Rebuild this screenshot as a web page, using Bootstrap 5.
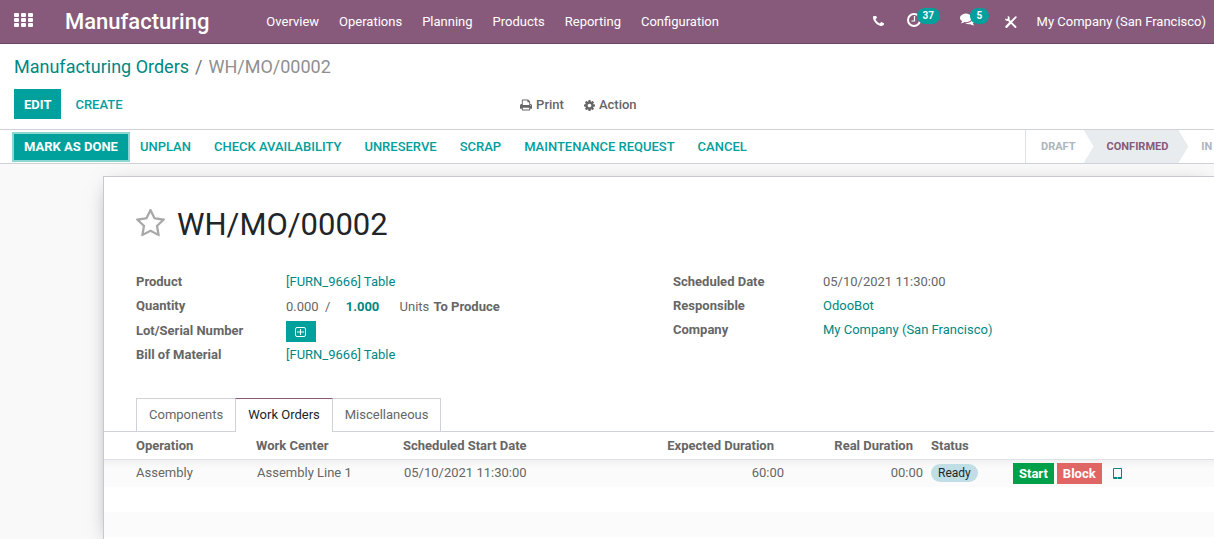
<!DOCTYPE html>
<html lang="en">
<head>
<meta charset="utf-8">
<meta name="viewport" content="width=device-width, initial-scale=1">
<title>WH/MO/00002 - Manufacturing</title>
<link rel="stylesheet" href="https://cdn.jsdelivr.net/npm/bootstrap@5.3.0/dist/css/bootstrap.min.css">
<style>
  :root { --teal: #00a09d; --plum: #875a7b; --link: #008784; --line: #cfd2da; }
  body { font: 13px/20px Roboto, sans-serif; color: #666; background: #f9f9f9; overflow-x: hidden; }
  a { color: var(--link); text-decoration: none; }
  svg { fill: currentColor; display: block; flex: none; }
  .btn { --bs-btn-font-size: 13px; --bs-btn-line-height: 20px; --bs-btn-border-radius: 0; --bs-btn-border-width: 0; --bs-btn-font-weight: 500; white-space: nowrap; }

  /* top navigation */
  .topbar { background: var(--plum); border-bottom: 1px solid #68465f; height: 44px; padding: 0 8px 0 14px; }
  .topbar a, .topbar button { color: #fff; white-space: nowrap; }
  .topbar .brand { font-size: 22px; line-height: 40px; font-weight: 500; margin: 0 57px 0 32px; }
  .apps-btn { margin-bottom: 3px; }
  .menu-links { gap: 20px; }
  .count-pill { position: absolute; left: 10px; top: -5px; background: var(--teal); border-radius: 8px; padding: 0 6px; font-size: 10px; line-height: 16px; font-weight: 700; }
  .tray-chat .count-pill { padding: 0 7px; }
  .tray-phone { margin-right: 23px; }
  .tray-clock { margin-right: 39px; margin-bottom: 4px; }
  .tray-chat { margin-right: 30px; margin-bottom: 4px; }
  .tray-tools { margin-right: 20px; }

  /* breadcrumb, buttons and status bar */
  .trail { font-size: 18px; line-height: 24px; padding: 11px 14px 10px; color: #8f8f8f; }
  .trail .slash { margin: 0 6px; color: #6c757d; }
  .tool-row { padding: 0 14px 10px; }
  .btn-main { --bs-btn-bg: var(--teal); --bs-btn-color: #fff; --bs-btn-hover-bg: #008784; --bs-btn-hover-color: #fff; --bs-btn-font-weight: 700; padding: 5px 10px; }
  .btn-flat { --bs-btn-color: var(--teal); --bs-btn-hover-color: #006d6b; padding: 5px 11px; }
  .btn-tool { --bs-btn-color: #666; padding: 5px 10px; }
  .tool-row .btn { padding-top: 6px; padding-bottom: 4px; }
  .tool-row .btn-tool { padding-left: 8px; padding-right: 12px; }
  .actions-left { flex: 0 0 42%; gap: 3px; }
  .statusbar { border-top: 1px solid var(--line); border-bottom: 1px solid var(--line); height: 35px; padding-left: 14px; }
  .status-actions { gap: 1px; }
  .statusbar .btn { padding-top: 3px; padding-bottom: 3px; }
  .statusbar .btn-main { outline: 2px solid #8cd6d4; }
  .steps { flex: 0 0 189px; overflow: hidden; border-left: 1px solid #dee2e6; font-size: 11px; line-height: 33px; font-weight: 700; color: #adb5bd; white-space: nowrap; }
  .step-first { padding: 0 8px 0 15px; }
  .step-current { background: #e9ecef; color: var(--plum); padding: 0 20px 0 23px; clip-path: polygon(0 0, calc(100% - 10px) 0, 100% 50%, calc(100% - 10px) 100%, 0 100%, 10px 50%); }
  .step-next { padding-left: 13px; }

  /* form sheet */
  .sheet { margin: 12px 0 0 103px; background: #fff; border: solid #c8c8d3; border-width: 1px 0 0 1px; box-shadow: 0 5px 20px -8px rgba(0,0,0,.5); }
  .sheet-body { padding: 24px 4px 0 32px; }
  .title-row { gap: 12px; }
  .sheet h1 { font-size: 31px; line-height: 46px; font-weight: 400; color: #212529; margin: 0; padding-top: 1px; }
  .star { color: #a8a8a8; border: 0; background: none; padding: 0 0 4px; }
  .fields { padding-top: 24px; min-height: 150px; }
  .field-row { display: grid; grid-template-columns: 150px 1fr; min-height: 24px; padding-bottom: 4px; }
  .field-row dt { font-weight: 700; }
  .field-row dd { margin: 0; }
  .field-row .qty { padding-top: 1px; }
  .qty b { color: var(--link); margin: 0 17px 0 12px; }
  .qty strong { margin-left: 1px; }
  .field-row.lot-row { padding-bottom: 3px; }
  .lot-btn { padding: 6px 10px 5px 9px; }

  /* notebook tabs and work order list */
  .tabs { padding-left: 32px; border-bottom: 1px solid var(--line); }
  .tabs .nav-link { color: #666; border: 1px solid var(--line); border-bottom: 0; border-radius: 0; padding: 6px 12px; margin-left: -1px; }
  .tabs .nav-item:first-child .nav-link { margin-left: 0; }
  .tabs .nav-link.active { color: #212529; background: #fff; border-top-color: var(--plum); margin-bottom: -1px; padding-bottom: 7px; position: relative; }
  .orders { table-layout: fixed; width: 100%; }
  .orders th { font-weight: 700; padding: 4px 4px 3px; }
  .orders td { padding: 0 5px; height: 25px; }
  .orders thead { border-bottom: 1px solid #dee2e6; }
  .orders th:first-child, .orders td:first-child { padding-left: 32px; }
  .orders th.num { padding-right: 14px; }
  .orders td.num { padding-right: 4px; }
  .orders tbody tr:nth-child(odd) { background: #fbfbfb; }
  .orders tbody tr:first-child { background: linear-gradient(#f1f1f1, #fbfbfb 8px); }
  .orders tbody tr:first-child td { height: 27px; }
  .state-pill { background: #c1dee6; color: #212529; border-radius: 9px; font-size: 12px; line-height: 18px; padding: 0 7px; display: inline-block; }
  .orders .btn { padding: 0 6px; line-height: 21px; font-weight: 700; color: #fff; }
  .btn-go { --bs-btn-bg: #00a04a; --bs-btn-hover-bg: #00873e; }
  .btn-stop { --bs-btn-bg: #e06666; --bs-btn-hover-bg: #cc5252; margin-left: 3px; }
  .tablet { margin-left: 11px; }
</style>
</head>
<body class="d-flex flex-column min-vh-100">
<nav class="topbar d-flex align-items-center">
  <button class="btn p-0 apps-btn" aria-label="Apps"><svg width="19" height="15" viewBox="0 0 19 15"><path d="M1 0h3q1 0 1 1v2q0 1-1 1H1q-1 0-1-1V1q0-1 1-1zm7 0h3q1 0 1 1v2q0 1-1 1H8q-1 0-1-1V1q0-1 1-1zm7 0h3q1 0 1 1v2q0 1-1 1h-3q-1 0-1-1V1q0-1 1-1zM1 5h3q1 0 1 1v2q0 1-1 1H1q-1 0-1-1V6q0-1 1-1zm7 0h3q1 0 1 1v2q0 1-1 1H8q-1 0-1-1V6q0-1 1-1zm7 0h3q1 0 1 1v2q0 1-1 1h-3q-1 0-1-1V6q0-1 1-1zM1 10h3q1 0 1 1v2q0 1-1 1H1q-1 0-1-1v-2q0-1 1-1zm7 0h3q1 0 1 1v2q0 1-1 1H8q-1 0-1-1v-2q0-1 1-1zm7 0h3q1 0 1 1v2q0 1-1 1h-3q-1 0-1-1v-2q0-1 1-1z"/></svg></button>
  <a class="brand" href="#">Manufacturing</a>
  <div class="menu-links d-flex me-auto">
    <a href="#">Overview</a><a href="#">Operations</a><a href="#">Planning</a><a href="#">Products</a><a href="#">Reporting</a><a href="#">Configuration</a>
  </div>
  <div class="d-flex align-items-center">
    <a href="#" class="tray-phone" aria-label="Phone"><svg width="11" height="11" viewBox="0 256 1408 1408"><path d="M1408 1240q0 27-10 70.500t-21 68.500q-21 50-122 106-94 51-186 51-27 0-53-3.500t-57.500-12.500-47-14.500-55.500-20.500-49-18q-98-35-175-83-127-79-264-216t-216-264q-48-77-83-175-3-9-18-49t-20.500-55.500-14.500-47-12.500-57.500-3.500-53q0-92 51-186 56-101 106-122 25-11 68.500-21t70.500-10q14 0 21 3 18 6 53 76 11 19 30 54t35 63.500 31 53.500q3 4 17.500 25t21.500 35.500 7 28.500q0 20-28.500 50t-62 55-62 53-28.500 46q0 9 5 22.500t8.500 20.500 14 24 11.500 19q76 137 174 235t235 174q2 1 19 11.500t24 14 20.500 8.500 22.500 5q18 0 46-28.500t53-62 55-62 50-28.500q14 0 28.500 7t35.500 21.500 25 17.500q25 15 53.500 31t63.500 35 54 30q70 35 76 53 3 7 3 21z"/></svg></a>
    <a href="#" class="position-relative tray-clock" aria-label="Activities"><svg width="14" height="14" viewBox="0 0 14 14"><circle cx="7" cy="7" r="6" fill="none" stroke="currentColor" stroke-width="2"/><path d="M7.500 3v5H4.500" fill="none" stroke="currentColor" stroke-width="1.200"/></svg><span class="count-pill">37</span></a>
    <a href="#" class="position-relative tray-chat" aria-label="Messages"><svg width="15" height="13" viewBox="0 256 1792 1408"><path d="M1408 768q0 139-94 257t-256.500 186.500-353.500 68.500q-86 0-176-16-124 88-278 128-36 9-86 16h-3q-11 0-20.500-8t-11.500-21q-1-3-1-6.500t.5-6.500 2-6l2.500-5 3.500-5.500 4-5 4.500-5 4-4.500q5-6 23-25t26-29.500 22.500-29 25-38.500 20.500-44q-124-72-195-177t-71-224q0-139 94-257t256.500-186.500 353.500-68.500 353.500 68.500 256.500 186.500 94 257zm384 256q0 120-71 224.500t-195 176.500q10 24 20.500 44t25 38.500 22.500 29 26 29.500 23 25q1 1 4 4.500t4.500 5 4 5 3.500 5.500l2.500 5 2 6 .5 6.500-1 6.500q-3 14-13 22t-22 7q-50-7-86-16-154-40-278-128-90 16-176 16-271 0-472-132 58 4 88 4 161 0 309-45t264-129q125-92 192-212t67-254q0-77-23-152 129 71 204 178t75 230z"/></svg><span class="count-pill">5</span></a>
    <a href="#" class="tray-tools" aria-label="Developer tools"><svg width="12" height="12" viewBox="0 0 12 12"><path d="M4 4.500l6.500 6.500M10.800 1.200L6.500 5.500" fill="none" stroke="currentColor" stroke-width="1.800" stroke-linecap="round"/><path d="M5.500 6.500L1.500 10.800" fill="none" stroke="currentColor" stroke-width="2.400" stroke-linecap="round"/><path d="M2.600 0L3 2 1.800 3.200 0 2.600Q0 5 2.600 5 5 4.500 4.800 2 4.500.2 2.600 0z"/></svg></a>
    <a href="#">My Company (San Francisco)</a>
  </div>
</nav>

<header class="bg-white">
  <div class="trail"><a href="#">Manufacturing Orders</a><span class="slash">/</span><span>WH/MO/00002</span></div>
  <div class="d-flex tool-row">
    <div class="actions-left d-flex"><button class="btn btn-main">EDIT</button><button class="btn btn-flat">CREATE</button></div>
    <div class="d-flex">
      <button class="btn btn-tool d-flex align-items-center gap-1"><svg width="12" height="12" viewBox="0 128 1664 1536"><path d="M384 1536h896v-256h-896v256zm0-640h896v-384h-160q-40 0-68-28t-28-68v-160h-640v640zm1152 64q0-26-19-45t-45-19-45 19-19 45 19 45 45 19 45-19 19-45zm128 0v416q0 13-9.500 22.500t-22.500 9.500h-224v160q0 40-28 68t-68 28h-960q-40 0-68-28t-28-68v-160h-224q-13 0-22.500-9.500t-9.500-22.500v-416q0-79 56.500-135.500t135.500-56.500h64v-544q0-40 28-68t68-28h672q40 0 88 20t76 48l152 152q28 28 48 76t20 88v256h64q79 0 135.500 56.500t56.500 135.500z"/></svg>Print</button>
      <button class="btn btn-tool d-flex align-items-center gap-1"><svg width="11" height="11" viewBox="0 128 1536 1536"><path d="M1024 896q0-106-75-181t-181-75-181 75-75 181 75 181 181 75 181-75 75-181zm512-109v222q0 12-8 23t-20 13l-185 28q-19 54-39 91 35 50 107 138 10 12 10 25t-9 23q-27 37-99 108t-94 71q-12 0-26-9l-138-108q-44 23-91 38-16 136-29 186-7 28-36 28h-222q-14 0-24.500-8.500t-11.500-21.500l-28-184q-49-16-90-37l-141 107q-10 9-25 9-14 0-25-11-126-114-165-168-7-10-7-23 0-12 8-23 15-21 51-66.500t54-70.500q-27-50-41-99l-183-27q-13-2-21-12.500t-8-23.500v-222q0-12 8-23t19-13l186-28q14-46 39-92-40-57-107-138-10-12-10-24 0-10 9-23 26-36 98.500-107.500t94.500-71.500q13 0 26 10l138 107q44-23 91-38 16-136 29-186 7-28 36-28h222q14 0 24.500 8.500t11.500 21.500l28 184q49 16 90 37l142-107q9-9 24-9 13 0 25 10 129 119 165 170 7 8 7 22 0 12-8 23-15 21-51 66.500t-54 70.500q26 50 41 98l183 28q13 2 21 12.500t8 23.500z"/></svg>Action</button>
    </div>
  </div>
  <div class="statusbar d-flex align-items-center">
    <div class="status-actions d-flex me-auto">
      <button class="btn btn-main">MARK AS DONE</button><button class="btn btn-flat">UNPLAN</button><button class="btn btn-flat">CHECK AVAILABILITY</button><button class="btn btn-flat">UNRESERVE</button><button class="btn btn-flat">SCRAP</button><button class="btn btn-flat">MAINTENANCE REQUEST</button><button class="btn btn-flat">CANCEL</button>
    </div>
    <div class="steps d-flex"><span class="step-first">DRAFT</span><span class="step-current">CONFIRMED</span><span class="step-next">IN PROGRESS</span></div>
  </div>
</header>

<main class="sheet flex-grow-1">
  <div class="sheet-body">
    <div class="d-flex align-items-center title-row"><button class="star" aria-label="Favourite"><svg width="29" height="28" viewBox="0 64 1664 1587"><path d="M1137 1004l306-297-422-62-189-382-189 382-422 62 306 297-73 421 378-199 377 199zm527-357q0 22-26 48l-363 354 86 500q1 7 1 20 0 50-41 50-19 0-40-12l-449-236-449 236q-22 12-40 12-21 0-31.500-14.500t-10.500-35.500q0-6 2-20l86-500-364-354q-25-27-25-48 0-37 56-46l502-73 225-455q19-41 49-41t49 41l225 455 502 73q56 9 56 46z"/></svg></button><h1>WH/MO/00002</h1></div>
    <div class="row g-0 fields">
      <dl class="col-6 mb-0">
        <div class="field-row"><dt>Product</dt><dd><a href="#">[FURN_9666] Table</a></dd></div>
        <div class="field-row"><dt>Quantity</dt><dd class="qty">0.000 &nbsp;/ <b>1.000</b> Units <strong>To Produce</strong></dd></div>
        <div class="field-row lot-row"><dt>Lot/Serial Number</dt><dd><button class="btn btn-main lot-btn" aria-label="Create lot"><svg width="11" height="10" viewBox="0 0 11 10"><path d="M2 .5h7q1.500 0 1.500 1.500v6q0 1.500-1.500 1.500H2Q.5 9.500.5 8V2Q.5.5 2 .5zM5.500 2v6M2 5h7" fill="none" stroke="currentColor"/></svg></button></dd></div>
        <div class="field-row"><dt>Bill of Material</dt><dd><a href="#">[FURN_9666] Table</a></dd></div>
      </dl>
      <dl class="col-6 mb-0">
        <div class="field-row"><dt>Scheduled Date</dt><dd>05/10/2021 11:30:00</dd></div>
        <div class="field-row"><dt>Responsible</dt><dd><a href="#">OdooBot</a></dd></div>
        <div class="field-row"><dt>Company</dt><dd><a href="#">My Company (San Francisco)</a></dd></div>
      </dl>
    </div>
  </div>
  <ul class="nav tabs">
    <li class="nav-item"><a class="nav-link" href="#">Components</a></li>
    <li class="nav-item"><a class="nav-link active" href="#" aria-current="page">Work Orders</a></li>
    <li class="nav-item"><a class="nav-link" href="#">Miscellaneous</a></li>
  </ul>
  <table class="orders">
    <colgroup><col style="width:148px"><col style="width:147px"><col style="width:201px"><col style="width:188px"><col style="width:139px"><col style="width:82px"><col></colgroup>
    <thead><tr><th>Operation</th><th>Work Center</th><th>Scheduled Start Date</th><th class="num text-end">Expected Duration</th><th class="num text-end">Real Duration</th><th>Status</th><th></th></tr></thead>
    <tbody>
      <tr><td>Assembly</td><td>Assembly Line 1</td><td>05/10/2021 11:30:00</td><td class="num text-end">60:00</td><td class="num text-end">00:00</td><td class="px-1"><span class="state-pill">Ready</span></td>
      <td class="px-1"><div class="d-flex align-items-center"><button class="btn btn-go">Start</button><button class="btn btn-stop">Block</button><a href="#" aria-label="Open tablet view" class="tablet"><svg width="9" height="11" viewBox="0 0 9 11"><path fill-rule="evenodd" d="M1 0h7q1 0 1 1v9q0 1-1 1H1q-1 0-1-1V1q0-1 1-1zm0 1v8h7V1zM4 9.500v1h1v-1z"/></svg></a></div></td></tr>
      <tr><td colspan="7"></td></tr>
      <tr><td colspan="7"></td></tr>
    </tbody>
  </table>
</main>
<script src="https://cdn.jsdelivr.net/npm/bootstrap@5.3.0/dist/js/bootstrap.bundle.min.js"></script>
</body>
</html>
